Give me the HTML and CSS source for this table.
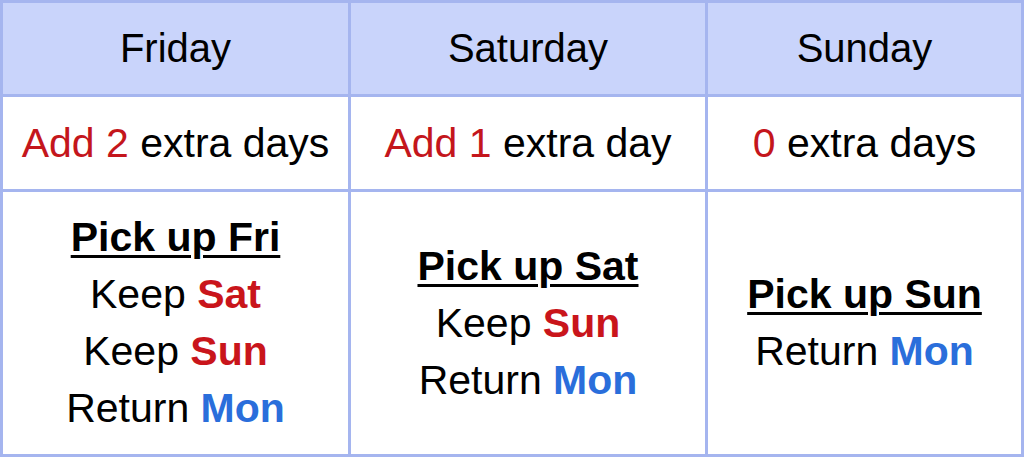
FILE: index.html
```html
<!DOCTYPE html>
<html lang="en">
<head>
<meta charset="utf-8">
<title>Weekend rental days</title>
<link rel="stylesheet" href="styles.css">
</head>
<body>
<div class="table">
  <div class="cell head">Friday</div>
  <div class="cell head">Saturday</div>
  <div class="cell head">Sunday</div>

  <div class="cell"><span class="text"><span class="red">Add 2</span> extra days</span></div>
  <div class="cell"><span class="text"><span class="red">Add 1</span> extra day</span></div>
  <div class="cell"><span class="text"><span class="red">0</span> extra days</span></div>

  <div class="cell plan">
    <div class="line title">Pick up Fri</div>
    <div class="line">Keep <b class="red-b">Sat</b></div>
    <div class="line">Keep <b class="red-b">Sun</b></div>
    <div class="line">Return <b class="blue">Mon</b></div>
  </div>
  <div class="cell plan">
    <div class="line title">Pick up Sat</div>
    <div class="line">Keep <b class="red-b">Sun</b></div>
    <div class="line">Return <b class="blue">Mon</b></div>
  </div>
  <div class="cell plan">
    <div class="line title">Pick up Sun</div>
    <div class="line">Return <b class="blue">Mon</b></div>
  </div>
</div>
</body>
</html>
```

FILE: styles.css
```css
html, body {
  margin: 0;
  padding: 0;
  background: #ffffff;
}

.table {
  display: grid;
  grid-template-columns: 345px 354px 313px;
  grid-template-rows: 91px 92px 262px;
  gap: 3px;
  padding: 3px;
  width: 1024px;
  height: 457px;
  box-sizing: border-box;
  background: #a5b5ef;
  font-family: "Liberation Sans", Arial, sans-serif;
  font-size: 41px;
  color: #000000;
}

.cell {
  background: #ffffff;
  display: flex;
  align-items: center;
  justify-content: center;
  text-align: center;
  white-space: nowrap;
}

.cell.head {
  background: #c9d4fb;
  font-size: 40px;
}

.plan {
  flex-direction: column;
  line-height: 57px;
}

.line {
  display: block;
}

.title {
  font-weight: bold;
  text-decoration: underline;
  text-decoration-thickness: 3px;
  text-underline-offset: 4px;
}

.red {
  color: #c4161c;
}

.red-b {
  color: #c9151b;
  font-weight: bold;
}

.blue {
  color: #2a6edb;
  font-weight: bold;
}
```
